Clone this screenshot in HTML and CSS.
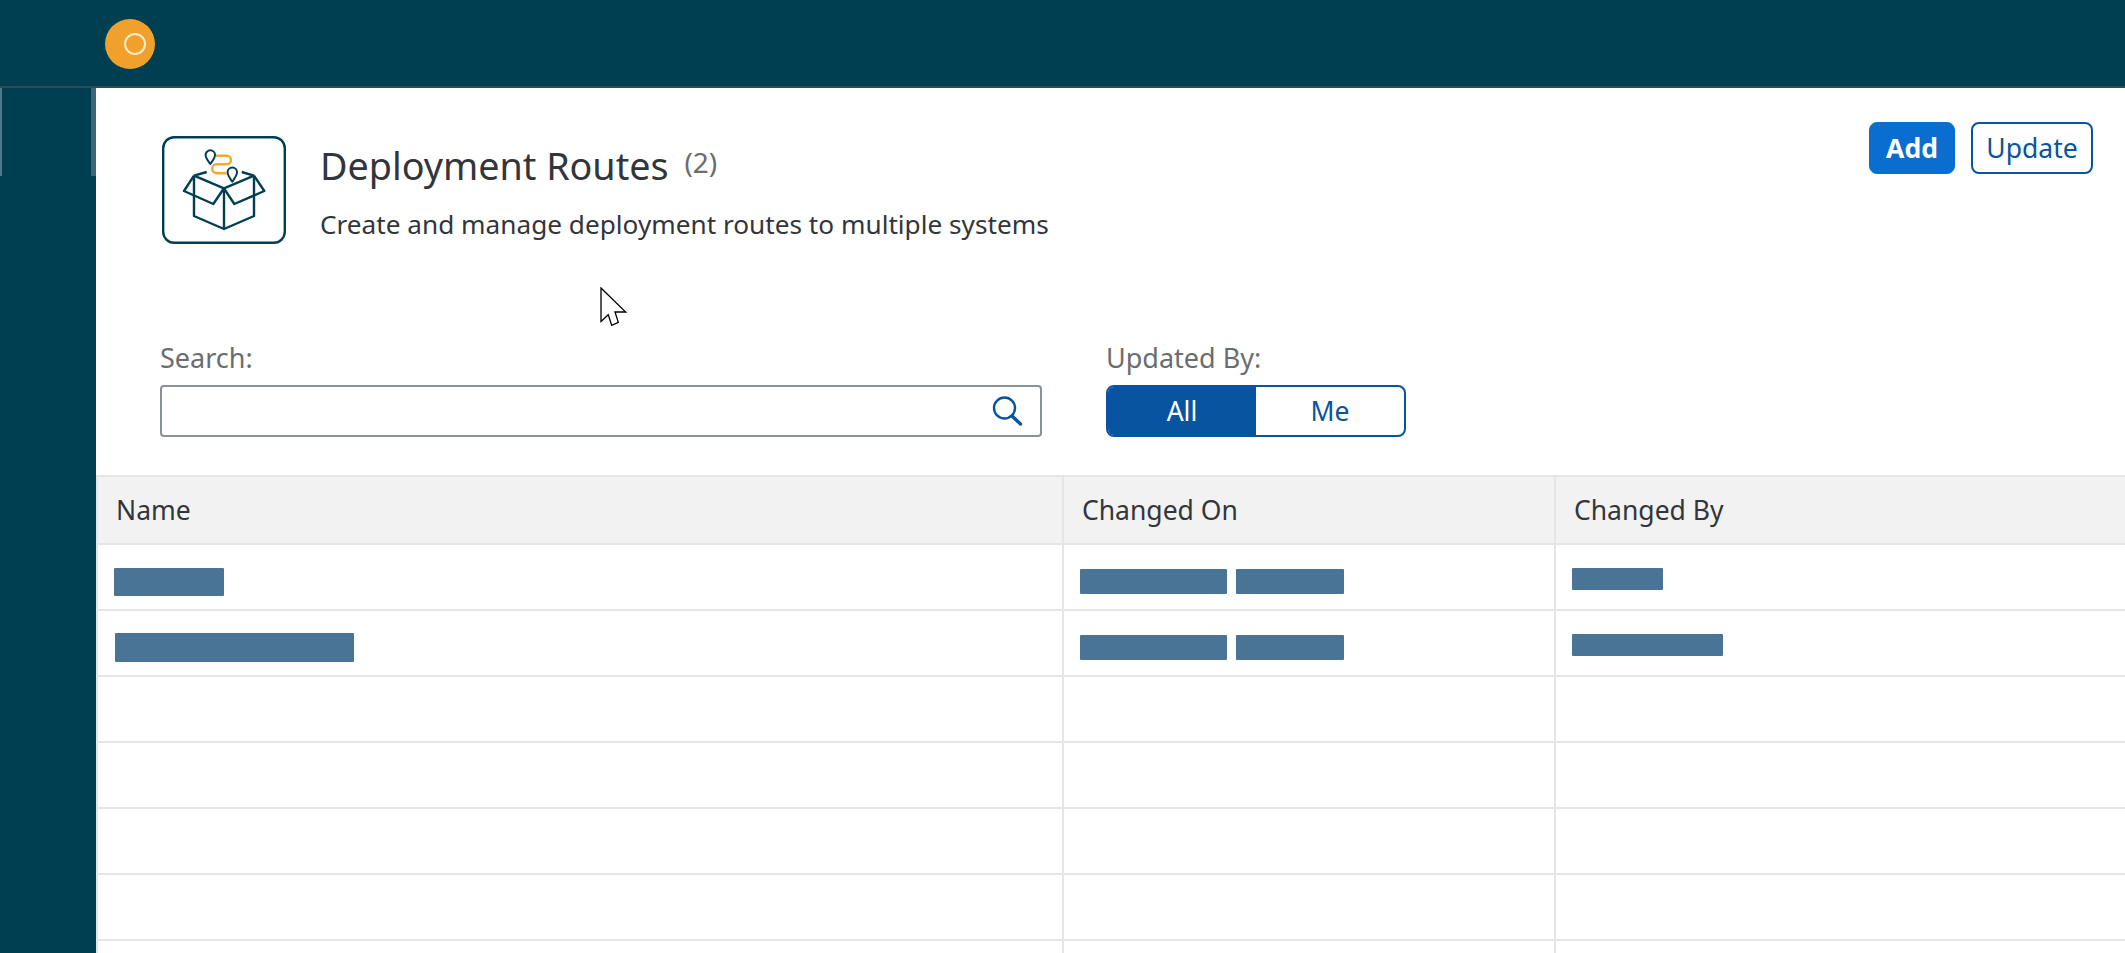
FILE: index.html
```html
<!DOCTYPE html>
<html lang="en">
<head>
    <meta charset="UTF-8">
    <title>Deployment Routes</title>
    <link rel="stylesheet" href="styles.css">
</head>
<body>
    <!-- Top bar -->
    <header class="topbar">
        <div class="avatar"><span class="avatar-ring"></span></div>
    </header>

    <div class="shell">
        <!-- Left rail -->
        <aside class="rail">
            <span class="rail-edge"></span>
            <span class="rail-edge"></span>
        </aside>

        <main class="panel">
            <section class="head">
                <svg class="app-icon" width="124" height="108" viewBox="0 0 124 108" fill="none">
                    <rect x="1.2" y="1.2" width="121.6" height="105.6" rx="11" stroke="#003f52" stroke-width="2.4"/>
                    <g stroke="#003f52" stroke-width="2.4" stroke-linejoin="round">
                        <path d="M32 39.700 L62 52.300 L92 39.700"/>
                        <path d="M32 39.700 V80 L62 93 L92 80 V39.700"/>
                        <path d="M62 52.300 V93"/>
                        <path d="M32 39.700 L22 55 L51.300 68 L62 52.300 L72.300 68 L102.300 55 L92 39.700"/>
                        <path d="M32 39.700 L44.700 36"/>
                        <path d="M79.700 36 L92 39.700"/>
                        <path d="M53 19 A4.700 4.700 0 1 0 43.600 19 C43.600 22 46 25 48.300 28 C50.600 25 53 22 53 19 Z" stroke-width="2"/>
                        <path d="M75 36.300 A4.700 4.700 0 1 0 65.600 36.300 C65.600 39.300 68 42.500 70.300 45.700 C72.600 42.500 75 39.300 75 36.300 Z" stroke-width="2"/>
                    </g>
                    <path d="M54 19.700 H64.700 A4.300 4.300 0 0 1 64.700 28.300 H54.700 A4.500 4.500 0 0 0 54.700 37.300 H64.700" stroke="#f0ab2e" stroke-width="2.400"/>
                </svg>
                <div class="head-text">
                    <h1 class="title">Deployment Routes <span class="count">(2)</span></h1>
                    <p class="subtitle">Create and manage deployment routes to multiple systems</p>
                </div>
                <div class="actions">
                    <button class="btn btn-primary">Add</button>
                    <button class="btn btn-outline">Update</button>
                </div>
            </section>

            <section class="filters">
                <div class="field field-search">
                    <label class="field-label">Search:</label>
                    <div class="search-box">
                        <svg width="32" height="32" viewBox="0 0 32 32" fill="none" stroke="#0854a0">
                            <circle cx="13.500" cy="13" r="10.500" stroke-width="2.400"/>
                            <path d="M21 21 L29.500 29" stroke-width="3.400" stroke-linecap="round"/>
                        </svg>
                    </div>
                </div>
                <div class="field">
                    <label class="field-label">Updated By:</label>
                    <div class="toggle">
                        <span class="toggle-item toggle-on">All</span>
                        <span class="toggle-item">Me</span>
                    </div>
                </div>
            </section>

            <section class="table">
                <div class="cell cell-head">Name</div>
                <div class="cell cell-head">Changed On</div>
                <div class="cell cell-head">Changed By</div>

                <div class="cell"><span class="mask mask-name" style="width:110px"></span></div>
                <div class="cell"><span class="mask mask-date" style="width:147px"></span><span class="mask mask-date" style="width:108px"></span></div>
                <div class="cell"><span class="mask mask-user" style="width:91px"></span></div>

                <div class="cell"><span class="mask mask-wide" style="width:239px"></span></div>
                <div class="cell"><span class="mask mask-date" style="width:147px"></span><span class="mask mask-date" style="width:108px"></span></div>
                <div class="cell"><span class="mask mask-user" style="width:151px"></span></div>

                <div class="cell"></div><div class="cell"></div><div class="cell"></div>
                <div class="cell"></div><div class="cell"></div><div class="cell"></div>
                <div class="cell"></div><div class="cell"></div><div class="cell"></div>
                <div class="cell"></div><div class="cell"></div><div class="cell"></div>
                <div class="cell"></div><div class="cell"></div><div class="cell"></div>
            </section>
        </main>
    </div>

    <!-- Mouse pointer caught in the screenshot -->
    <svg class="pointer" width="28" height="42" viewBox="0 0 28 42">
        <path d="M1 1 L25.700 25 H15 L18.300 35.400 L11.700 38.400 L8.300 27.700 L1 34.400 Z" fill="#fff" stroke="#000" stroke-width="1.300"/>
    </svg>
</body>
</html>
```

FILE: styles.css
```css
* {
    box-sizing: border-box;
}
html {
    height: 953px;
    overflow: hidden;
}
body {
    margin: 0;
    height: 953px;
    overflow: hidden;
    background-color: #003f52;
    font-family: "Noto Sans", "Open Sans", sans-serif;
    color: #32363a;
    position: relative;
}

/* top bar */
.topbar {
    height: 88px;
    padding: 19px 0 0 105px;
    border-bottom: 2px solid #354a5f;
}
.avatar {
    width: 50px;
    height: 50px;
    border-radius: 50%;
    background-color: #f0a12c;
    display: flex;
    align-items: center;
    justify-content: center;
}
.avatar-ring {
    width: 22px;
    height: 22px;
    margin-left: 10px;
    border-radius: 50%;
    border: 2px solid #fdeccd;
}

/* left rail */
.shell {
    display: flex;
    height: 865px;
}
.rail {
    width: 96px;
    height: 88px;
    display: flex;
    justify-content: space-between;
}
.rail-edge {
    width: 2px;
    background-color: #4f7a8c;
}
.rail-edge:last-child {
    width: 5px;
    background-color: #3d6576;
}
.panel {
    flex: 1;
    background-color: #fff;
    min-width: 0;
    overflow: hidden;
}

/* page header */
.head {
    display: flex;
    padding: 48px 32px 0 66px;
    height: 254px;
}
.app-icon {
    flex: none;
}
.head-text {
    margin-left: 34px;
    flex: 1;
}
.title {
    margin: 5px 0 0;
    font-size: 37.700px;
    font-weight: 400;
    line-height: 50px;
}
.count {
    font-size: 28px;
    line-height: 1;
    color: #6a6d70;
    margin-left: 6px;
    vertical-align: 7px;
}
.subtitle {
    margin: 15px 0 0;
    font-size: 26.200px;
    line-height: 36px;
}
.actions {
    display: flex;
    gap: 16px;
    margin-top: -14px;
}
.btn {
    height: 52px;
    border-radius: 8px;
    font-family: inherit;
    font-size: 26.500px;
    padding: 0;
}
.btn-primary {
    width: 86px;
    background-color: #0a6ed1;
    border: 1px solid #0a6ed1;
    color: #fff;
    font-weight: 700;
}
.btn-outline {
    width: 122px;
    background-color: #fff;
    border: 2px solid #0854a0;
    color: #0854a0;
}

/* filters */
.filters {
    display: flex;
    gap: 64px;
    padding-left: 64px;
    height: 133px;
}
.field-search {
    width: 882px;
}
.field-label {
    display: block;
    font-size: 27px;
    line-height: 36px;
    height: 43px;
    margin: -2px 0 2px;
    color: #6a6d70;
}
.search-box {
    height: 52px;
    border: 2px solid #89919a;
    border-radius: 4px;
    display: flex;
    align-items: center;
    justify-content: flex-end;
    padding-right: 17px;
}
.toggle {
    display: flex;
    width: 300px;
    height: 52px;
    border: 2px solid #0854a0;
    border-radius: 8px;
    overflow: hidden;
    color: #0854a0;
    font-size: 26.500px;
}
.toggle-item {
    flex: 1;
    display: flex;
    align-items: center;
    justify-content: center;
}
.toggle-on {
    background-color: #0854a0;
    color: #fff;
}

/* table */
.table {
    display: grid;
    grid-template-columns: 966px 492px 1fr;
    grid-template-rows: 68px;
    grid-auto-rows: 66px;
    border-top: 2px solid #e5e5e5;
    border-left: 2px solid #e5e5e5;
}
.cell {
    border-bottom: 2px solid #e5e5e5;
    border-right: 2px solid #e5e5e5;
    padding-left: 16px;
    display: flex;
    align-items: flex-start;
}
.cell:nth-child(3n) {
    border-right: none;
}
.cell-head {
    background-color: #f2f2f2;
    align-items: center;
    font-size: 26.500px;
    padding-left: 18px;
}
.mask {
    display: block;
    background-color: #4a7496;
    border-radius: 1px;
}
.mask + .mask {
    margin-left: 9px;
}
.mask-name {
    height: 28px;
    margin-top: 23px;
}
.mask-wide {
    height: 29px;
    margin: 22px 0 0 1px;
}
.mask-date {
    height: 25px;
    margin-top: 24px;
}
.mask-user {
    height: 22px;
    margin-top: 23px;
}

.pointer {
    position: absolute;
    left: 600px;
    top: 287px;
}
```
